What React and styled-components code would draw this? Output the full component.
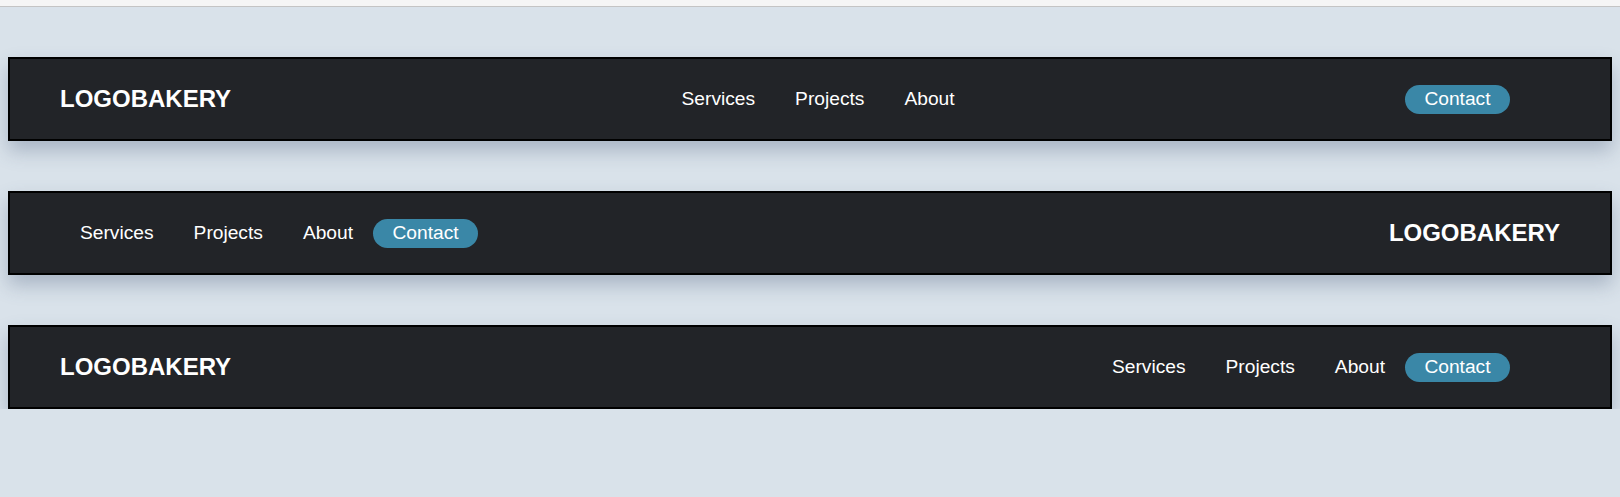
import React from "react";
import styled, { createGlobalStyle } from "styled-components";

const GlobalStyle = createGlobalStyle`
  html, body {
    margin: 0;
    padding: 0;
    background: #d9e2ea;
    font-family: "Liberation Sans", Arial, sans-serif;
  }
`;

const TopStrip = styled.div`
  height: 6px;
  background: #f5f5f5;
  border-bottom: 1px solid #c4c4c4;
`;

const Page = styled.div`
  display: flex;
  flex-direction: column;
  gap: 50px;
  padding: 50px 8px 0;
`;

const Bar = styled.header`
  box-sizing: border-box;
  height: 84px;
  display: flex;
  align-items: center;
  justify-content: space-between;
  padding: 0 50px;
  background: #222428;
  border: 2px solid #000;
  box-shadow: 0 10px 18px rgba(70, 90, 120, 0.32);
`;

const Logo = styled.div`
  color: #fff;
  font-size: 24px;
  font-weight: 700;
`;

const Links = styled.nav`
  display: flex;
  align-items: center;
`;

const Link = styled.a`
  color: #fff;
  font-size: 19.2px;
  padding: 0 20px;
  text-decoration: none;
`;

const Contact = styled.a`
  display: inline-flex;
  align-items: center;
  justify-content: center;
  box-sizing: border-box;
  height: 29px;
  width: 105px;
  border-radius: 15px;
  background: #3a87a7;
  color: #fff;
  font-size: 19.2px;
  text-decoration: none;
  margin-right: ${(p) => (p.$edge ? "50px" : "0")};
`;

const Group = styled.div`
  display: flex;
  align-items: center;
`;

const NavLinks = () => (
  <Links>
    <Link href="#">Services</Link>
    <Link href="#">Projects</Link>
    <Link href="#">About</Link>
  </Links>
);

export default function App() {
  return (
    <>
      <GlobalStyle />
      <TopStrip />
      <Page>
        <Bar>
          <Logo>LOGOBAKERY</Logo>
          <NavLinks />
          <Contact href="#" $edge>Contact</Contact>
        </Bar>
        <Bar>
          <Group>
            <NavLinks />
            <Contact href="#">Contact</Contact>
          </Group>
          <Logo>LOGOBAKERY</Logo>
        </Bar>
        <Bar>
          <Logo>LOGOBAKERY</Logo>
          <Group>
            <NavLinks />
            <Contact href="#" $edge>Contact</Contact>
          </Group>
        </Bar>
      </Page>
    </>
  );
}
